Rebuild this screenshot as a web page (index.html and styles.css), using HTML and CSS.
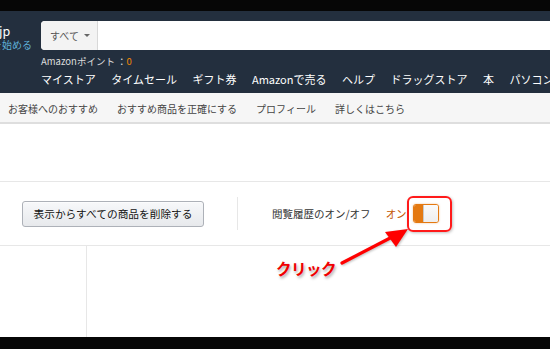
FILE: index.html
```html
<!DOCTYPE html>
<html lang="ja">
<head>
<meta charset="utf-8">
<link rel="stylesheet" href="styles.css">
</head>
<body>
<div class="page">
  <div class="topbar"></div>
  <header class="header">
    <div class="row1">
      <div class="logo">
        <span class="logo-jp">jp</span>
        <a class="logo-link">を始める</a>
      </div>
      <div class="search">
        <div class="dropdown">すべて <span class="caret"></span></div>
        <div class="search-input"></div>
      </div>
    </div>
    <div class="points">Amazonポイント ：<span class="pts">0</span></div>
    <nav class="nav">
      <span>マイストア</span>
      <span>タイムセール</span>
      <span>ギフト券</span>
      <span>Amazonで売る</span>
      <span>ヘルプ</span>
      <span>ドラッグストア</span>
      <span>本</span>
      <span>パソコン</span>
    </nav>
  </header>
  <div class="subnav">
    <span>お客様へのおすすめ</span>
    <span>おすすめ商品を正確にする</span>
    <span>プロフィール</span>
    <span>詳しくはこちら</span>
  </div>
  <div class="blank"></div>
  <div class="controls">
    <button class="btn">表示からすべての商品を削除する</button>
    <div class="sep"></div>
    <span class="label">閲覧履歴のオン/オフ</span>
    <span class="on">オン</span>
    <span class="toggle"><span class="toggle-fill"></span><span class="toggle-knob"></span></span>
  </div>
  <div class="content">
    <div class="leftcol"></div>
    <div class="maincol"></div>
  </div>
  <div class="bottombar"></div>

  <div class="highlight"></div>
  <svg class="arrow" width="550" height="349" viewBox="0 0 550 349">
    <line x1="342" y1="263" x2="394" y2="236" stroke="#ff0000" stroke-width="3.2" stroke-linecap="round"/>
    <polygon points="385,232 408,229 396,247" fill="#ff0000"/>
  </svg>
  <div class="click">クリック</div>
</div>
</body>
</html>
```

FILE: styles.css
```css
* { box-sizing: border-box; }
html, body { margin: 0; padding: 0; }
body {
  width: 550px;
  height: 349px;
  overflow: hidden;
  background: #fff;
  font-family: "Noto Sans CJK JP", "Noto Sans", sans-serif;
}
.page {
  position: relative;
  width: 550px;
  height: 349px;
  display: flex;
  flex-direction: column;
  overflow: hidden;
}
.topbar { height: 11px; background: #060606; flex: none; }
.header {
  height: 82px;
  flex: none;
  background: #232f3e;
  padding-top: 10px;
  display: flex;
  flex-direction: column;
}
.row1 { display: flex; height: 29px; }
.logo {
  width: 41px;
  flex: none;
  overflow: hidden;
  display: flex;
  flex-direction: column;
  color: #fff;
  white-space: nowrap;
}
.logo-jp { font-size: 12.5px; line-height: 13px; margin-top: 3px; margin-left: -1px; }
.logo-link {
  font-size: 10px;
  line-height: 12px;
  margin-top: 2px;
  color: #5fb0d8;
  text-decoration: underline;
  margin-left: -8px;
}
.search {
  flex: 1;
  display: flex;
  background: #fff;
  border-radius: 4px 0 0 4px;
  overflow: hidden;
  white-space: nowrap;
}
.dropdown {
  width: 57px;
  flex: none;
  background: #f3f3f3;
  border-right: 1px solid #d8d8d8;
  color: #555;
  font-size: 10px;
  line-height: 29px;
  padding-left: 9px;
  display: flex;
  align-items: center;
  gap: 5px;
}
.caret {
  width: 0; height: 0;
  border-left: 3px solid transparent;
  border-right: 3px solid transparent;
  border-top: 3px solid #666;
}
.search-input { flex: 1; }
.points {
  margin-top: 4px;
  padding-left: 41px;
  font-size: 9.5px;
  line-height: 14px;
  color: #ddd;
}
.pts { color: #f08804; }
.nav {
  margin-top: 3px;
  padding-left: 41px;
  display: flex;
  gap: 15.5px;
  font-size: 11px;
  line-height: 16px;
  color: #fff;
  white-space: nowrap;
}
.subnav {
  height: 31px;
  flex: none;
  background: #f6f6f6;
  border-bottom: 2px solid #dedede;
  padding: 2px 0 0 8px;
  display: flex;
  gap: 19px;
  font-size: 10px;
  line-height: 27px;
  color: #444;
  white-space: nowrap;
}
.blank { height: 57px; flex: none; }
.controls {
  height: 65px;
  flex: none;
  border-top: 1px solid #e7e7e7;
  border-bottom: 1px solid #e7e7e7;
  display: flex;
  align-items: center;
  padding-left: 22px;
  white-space: nowrap;
}
.btn {
  width: 182px;
  height: 26px;
  margin: 0;
  padding: 0;
  border: 1px solid #adb1b8;
  border-radius: 3px;
  background: linear-gradient(#f7f8fa, #e7e9ec);
  font-family: inherit;
  font-size: 10.7px;
  color: #111;
  box-shadow: 0 1px 0 rgba(255,255,255,0.6) inset;
}
.sep {
  width: 1px;
  height: 33px;
  background: #e7e7e7;
  margin-left: 33px;
}
.label {
  margin-left: 34px;
  font-size: 10.5px;
  color: #333;
}
.on {
  margin-left: 15px;
  font-size: 10.5px;
  color: #c45500;
}
.toggle {
  margin-left: 6px;
  width: 26px;
  height: 19px;
  border: 1px solid #e47911;
  border-radius: 3px;
  display: flex;
  overflow: hidden;
  background: #fff;
  box-shadow: 0 0 2px rgba(228,121,17,0.5);
}
.toggle-fill { width: 9px; background: #e47911; }
.toggle-knob {
  flex: 1;
  background: linear-gradient(#fafafa, #eeeeee);
  border-left: 1px solid #c9c9c9;
}
.content { flex: 1; display: flex; }
.leftcol { width: 87px; border-right: 1px solid #e7e7e7; }
.maincol { flex: 1; }
.bottombar { height: 12px; flex: none; background: #060606; }

.highlight {
  position: absolute;
  left: 407px;
  top: 196px;
  width: 45px;
  height: 36px;
  border: 2px solid #ff1a1a;
  border-radius: 6px;
  box-shadow: 1px 1px 3px rgba(0,0,0,0.25);
}
.arrow {
  position: absolute;
  left: 0;
  top: 0;
  filter: drop-shadow(1px 1px 1px rgba(0,0,0,0.25));
}
.click {
  position: absolute;
  left: 276px;
  top: 256px;
  font-size: 15.5px;
  font-weight: bold;
  line-height: 24px;
  color: #f00000;
  letter-spacing: -0.5px;
  -webkit-text-stroke: 3px #fff;
  paint-order: stroke fill;
  text-shadow: 1px 2px 3px rgba(0,0,0,0.35);
  white-space: nowrap;
}
```
